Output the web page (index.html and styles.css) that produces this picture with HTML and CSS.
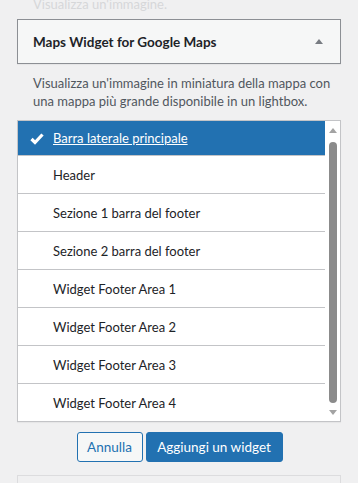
FILE: index.html
```html
<!DOCTYPE html>
<html lang="it">
<head>
<meta charset="utf-8">
<title>Maps Widget</title>
<link rel="stylesheet" href="styles.css">
</head>
<body>
<div class="page">
  <p class="faded">Visualizza un'immagine.</p>
  <div class="widget-head">
    <h3 class="widget-title">Maps Widget for Google Maps</h3>
    <span class="toggle"></span>
  </div>
  <p class="desc">Visualizza un'immagine in miniatura della mappa con una mappa più grande disponibile in un lightbox.</p>
  <div class="chooser">
    <ul class="areas">
      <li class="area area-first selected">
        <svg class="check" width="14" height="12" viewBox="0 0 14 12"><polyline points="1.5,6 5,9.5 12.5,1.5" fill="none" stroke="#fff" stroke-width="3.2" stroke-linecap="butt" stroke-linejoin="miter"/></svg>
        <a href="#" class="area-link">Barra laterale principale</a>
      </li>
      <li class="area">Header</li>
      <li class="area">Sezione 1 barra del footer</li>
      <li class="area">Sezione 2 barra del footer</li>
      <li class="area">Widget Footer Area 1</li>
      <li class="area">Widget Footer Area 2</li>
      <li class="area">Widget Footer Area 3</li>
      <li class="area area-last">Widget Footer Area 4</li>
    </ul>
    <div class="scrollbar">
      <span class="arrow-up"></span>
      <span class="thumb"></span>
      <span class="arrow-down"></span>
    </div>
  </div>
  <div class="actions">
    <button class="btn btn-secondary">Annulla</button>
    <button class="btn btn-primary">Aggiungi un widget</button>
  </div>
  <div class="next-widget"></div>
</div>
</body>
</html>
```

FILE: styles.css
```css
* { box-sizing: border-box; }
html, body { margin: 0; padding: 0; }
body {
  background: #f0f0f1;
  font-family: Lato, "Open Sans", sans-serif;
  color: #1d2327;
  width: 358px;
  height: 483px;
  overflow: hidden;
}
.page {
  padding: 0 17px 0 17px;
}
.faded {
  margin: -5px 0 0;
  padding-left: 16px;
  font-size: 13px;
  line-height: 18px;
  color: #d6d7d9;
  height: 19px;
}
.widget-head {
  margin-top: 5px;
  height: 45px;
  border: 1px solid #8c8f94;
  background: #f6f7f7;
  box-shadow: 0 1px 1px rgba(0,0,0,0.04);
  display: flex;
  align-items: center;
  justify-content: space-between;
  padding: 0 17px 0 15px;
}
.widget-title {
  margin: 0;
  font-size: 13.5px;
  font-weight: 700;
  color: #1d2327;
}
.toggle {
  width: 0;
  height: 0;
  border-left: 4px solid transparent;
  border-right: 4px solid transparent;
  border-bottom: 5px solid #787c82;
  margin-top: -1px;
}
.desc {
  margin: 10px 0 10px;
  padding: 0 10px 0 16px;
  font-size: 13px;
  line-height: 18px;
  color: #50575e;
}
.chooser {
  display: flex;
  border: 1px solid #c3c4c7;
  background: #fff;
  box-shadow: 0 1px 1px rgba(0,0,0,0.04);
  height: 302px;
}
.areas {
  list-style: none;
  margin: 0;
  padding: 0;
  flex: 1;
}
.area {
  height: 38px;
  border-bottom: 1px solid #c3c4c7;
  display: flex;
  align-items: center;
  padding-left: 35px;
  font-size: 13px;
  color: #1d2327;
}
.area-first { height: 35px; }
.area-last { border-bottom: none; height: 37px; }
.selected {
  background: #2271b1;
  padding-left: 12px;
  gap: 9px;
}
.area-link {
  color: #fff;
  text-decoration: underline;
}
.check { display: block; margin-top: 1px; }
.scrollbar {
  width: 15px;
  background: #fff;
  display: flex;
  flex-direction: column;
  align-items: center;
  padding-top: 7px;
}
.arrow-up, .arrow-down {
  width: 0;
  height: 0;
  border-left: 4.5px solid transparent;
  border-right: 4.5px solid transparent;
}
.arrow-up { border-bottom: 5px solid #a3a3a3; }
.arrow-down { border-top: 5px solid #a3a3a3; margin-top: 7px; }
.thumb {
  margin-top: 9px;
  width: 8px;
  height: 261px;
  border-radius: 4px;
  background: #8b8b8b;
}
.actions {
  margin-top: 10px;
  display: flex;
  justify-content: center;
  gap: 3px;
  padding-left: 1px;
}
.btn {
  height: 30px;
  border-radius: 3px;
  font-family: inherit;
  font-size: 13.5px;
  padding: 0 6px;
  border: 1px solid #2271b1;
  cursor: pointer;
}
.btn-secondary {
  background: #f6f7f7;
  color: #2271b1;
  width: 66px;
}
.btn-primary {
  background: #2271b1;
  color: #fff;
  width: 137px;
}
.next-widget {
  margin-top: 13px;
  height: 20px;
  border: 1px solid #dcdcde;
  background: #f0f0f1;
}
```
